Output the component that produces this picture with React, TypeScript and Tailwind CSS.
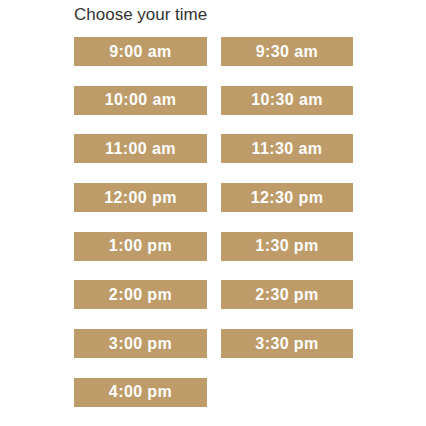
const times = [
  "9:00 am",
  "9:30 am",
  "10:00 am",
  "10:30 am",
  "11:00 am",
  "11:30 am",
  "12:00 pm",
  "12:30 pm",
  "1:00 pm",
  "1:30 pm",
  "2:00 pm",
  "2:30 pm",
  "3:00 pm",
  "3:30 pm",
  "4:00 pm",
];

export default function App() {
  return (
    <div className="min-h-screen bg-white pl-[74px] pt-[5px]">
      <h2
        className="text-[17px] leading-[20px] text-[#333333] mb-[12px]"
        style={{ fontFamily: "'Liberation Sans', Arial, sans-serif" }}
      >
        Choose your time
      </h2>
      <div className="grid grid-cols-[133px_132px] gap-x-[14px] gap-y-[19.7px]">
        {times.map((t) => (
          <div
            key={t}
            className="h-[29px] bg-[rgb(190,156,105)] text-white font-bold text-[16px] tracking-[0.4px] flex items-center justify-center"
            style={{ fontFamily: "'Liberation Sans', Arial, sans-serif" }}
          >
            {t}
          </div>
        ))}
      </div>
    </div>
  );
}
